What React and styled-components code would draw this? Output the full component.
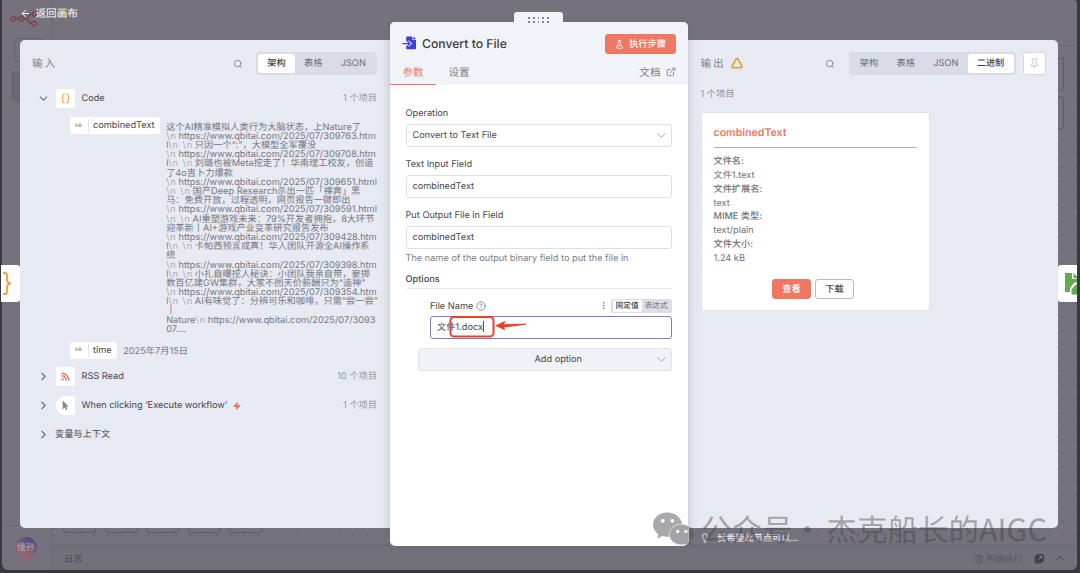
import React from "react";
import styled, { createGlobalStyle } from "styled-components";
import {
  ArrowLeft,
  Search,
  Pin,
  FlaskConical,
  ExternalLink,
  ChevronDown,
  ChevronRight,
  ChevronUp,
  CircleHelp,
  EllipsisVertical,
  Lightbulb,
  Trash2,
  Triangle,
  Zap,
} from "lucide-react";
import { FaRss, FaMousePointer } from "react-icons/fa";

const GlobalStyle = createGlobalStyle`
  * {
    box-sizing: border-box;
  }
  body {
    margin: 0;
    background: #39383c;
    font-family: Inter, "Noto Sans CJK SC", sans-serif;
    font-size: 9.2px;
    line-height: 14px;
    color: #555;
    text-rendering: geometricPrecision;
    -webkit-font-smoothing: antialiased;
  }
  svg {
    display: block;
    flex: none;
  }
`;

const Screen = styled.div`
  position: relative;
  width: 1080px;
  height: 573px;
  overflow: hidden;
  padding: 0 3px 3px 2px;
  background: #39383c;
`;

/* editor behind the dialog */

const Editor = styled.div`
  display: flex;
  width: 100%;
  height: 570px;
  background: #75727d;
  border-radius: 0 3px 6px 6px;
  overflow: hidden;
`;

const Sidebar = styled.div`
  display: flex;
  flex-direction: column;
  width: 50px;
  border-right: 1px solid #6d6a76;
  padding-top: 11px;
`;

const Logo = styled.svg`
  margin-left: 8px;
`;

const SideBox = styled.div`
  width: 30px;
  height: 24px;
  margin: 10px 0 0 12px;
  border: 1px solid #64616d;
  border-radius: 3px;
`;

const SideActive = styled.div`
  width: 34px;
  height: 31px;
  margin: 9px 0 0 9px;
  background: #6a6876;
  border-radius: 3px;
`;

const UserArea = styled.div`
  margin-top: auto;
  height: 45px;
  padding: 11px 0 0 13px;
  border-top: 1px solid #6d6a76;
`;

const Avatar = styled.div`
  width: 22px;
  height: 22px;
  border-radius: 50%;
  background: linear-gradient(215deg, #4d4585 10%, #75607f 48%, #98606a 62%, #8d6a72 90%);
  color: #b3b0ba;
  font-size: 9px;
  line-height: 22px;
  text-align: center;
  white-space: nowrap;
`;

const Workspace = styled.div`
  flex: 1;
  display: flex;
  flex-direction: column;
`;

const TopBar = styled.div`
  height: 46px;
  border-bottom: 1px solid #6c6975;
`;

const Canvas = styled.div`
  flex: 1;
  position: relative;
  display: flex;
  flex-direction: column;
  justify-content: space-between;
  padding-bottom: 12px;
  background-image: radial-gradient(circle, #66636e 0.7px, transparent 1px);
  background-size: 13.65px 13.65px;
  background-position: 8px 5px;
`;

const NodeButtons = styled.div`
  display: flex;
  flex-direction: column;
  align-items: flex-end;
  gap: 5px;
  padding: 12px 13px 0 0;
`;

const CanvasControls = styled.div`
  display: flex;
  gap: 8.5px;
  padding-left: 11px;
`;

const GhostBox = styled.div`
  width: 33px;
  height: 33px;
  border: 1px solid #5f5c68;
  border-radius: 3px;
  background: #75727d;
`;

const LogBar = styled.div`
  display: flex;
  align-items: center;
  height: 25px;
  padding: 2px 11px 0 12px;
  border-top: 1px solid #696672;
  background: #72707a;
  color: #4c4a55;
`;

const LogActions = styled.div`
  display: flex;
  align-items: center;
  margin-left: auto;
  color: #595662;
`;

const LogIcons = styled.div`
  display: flex;
  align-items: center;
  gap: 9px;
  margin: -2px 0 0 11px;
  color: #403e48;
`;

/* node details view */

const Overlay = styled.div`
  position: absolute;
  inset: 0;
`;

const BackLink = styled.div`
  position: absolute;
  left: 20px;
  top: 5px;
  display: flex;
  align-items: center;
  gap: 4.5px;
  height: 16px;
  color: #fff;
  font-size: 10.6px;
`;

const Tip = styled.div`
  position: absolute;
  left: 700px;
  top: 531px;
  display: flex;
  align-items: center;
  gap: 7px;
  height: 14px;
  color: #f4f4f7;
`;

/* drops a text by a pixel beside an icon */
const Text = styled.span`
  padding-top: 1.6px;
`;

const Panels = styled.div`
  display: flex;
  align-items: center;
  height: 568px;
  padding: 0 22px 0 20px;
`;

const SidePanel = styled.div`
  width: 370px;
  height: 488px;
  background: ${(p) =>
    p.$side === "left"
      ? "linear-gradient(to left, #dfe2ec, #e7eaf3 14px)"
      : "linear-gradient(to right, #dfe2ec, #e7eaf3 14px)"};
  border-radius: ${(p) => (p.$side === "left" ? "5px 0 0 5px" : "0 5px 5px 0")};
  padding: ${(p) => (p.$side === "left" ? "12px 13px 0 12px" : "12px 12.5px 0 12.5px")};
`;

const PanelHeader = styled.div`
  display: flex;
  align-items: center;
  height: 23px;
  color: #7e7f87;
`;

const PanelTitle = styled.div`
  padding-top: 1px;
  font-size: 10.6px;
  letter-spacing: 2px;
  margin-right: 5px;
`;

const WarningIcon = styled(Triangle)`
  margin-top: -2px;
`;

const Tabs = styled.div`
  display: flex;
  height: 23px;
  padding: 2px;
  margin-left: ${(p) => p.$left || 13}px;
  background: #d9dce6;
  border-radius: 3px;
`;

const Tab = styled.div`
  display: flex;
  align-items: center;
  padding: 1.6px 9.2px 0;
  border-radius: 3px;
  color: ${(p) => (p.$active ? "#3f4046" : "#6c6d76")};
  background: ${(p) => (p.$active ? "#fff" : "transparent")};
  font-weight: ${(p) => (p.$active ? 500 : 400)};
`;

const Spacer = styled.div`
  flex: 1;
`;

const PinButton = styled.div`
  display: flex;
  align-items: center;
  justify-content: center;
  width: 23px;
  height: 23px;
  margin-left: 7px;
  color: #c3c5d3;
  background: #fff;
  border: 1px solid #d4d6e2;
  border-radius: 3px;
`;

const SchemaRow = styled.div`
  display: flex;
  align-items: center;
  height: 19px;
  margin-top: ${(p) => p.$top}px;
  padding-left: 5px;
  color: #45464c;
`;

const NodeIcon = styled.div`
  display: flex;
  align-items: center;
  justify-content: center;
  width: 18.5px;
  height: 18.5px;
  margin: 0 7px 0 6px;
  background: #fff;
  border-radius: ${(p) => (p.$trigger ? "9px 2px 2px 9px" : "2px")};
  color: ${(p) => p.$color};
`;

const RowChevron = styled(ChevronRight)`
  margin-right: ${(p) => p.$gap || 0}px;
`;

const Trigger = styled(Zap)`
  margin-left: 6px;
`;

const Count = styled.div`
  margin-left: auto;
  padding-top: 1.6px;
  color: #94959d;
`;

const Field = styled.div`
  display: flex;
  align-items: flex-start;
  margin-top: ${(p) => p.$top}px;
  padding-left: 37.5px;
`;

const Pill = styled.div`
  display: flex;
  align-items: center;
  height: 17px;
  background: #fff;
  border-radius: 2.5px;
  color: #45464c;
  margin-right: 6.5px;
  padding-right: 5px;
`;

const PillType = styled.span`
  width: 19px;
  height: 14px;
  margin-right: 4.5px;
  border-right: 1px solid #e3e4ea;
  color: #777;
  font-size: 4.8px;
  font-weight: 500;
  line-height: 14px;
  text-align: center;
  letter-spacing: 0.4px;
`;

const Value = styled.div`
  padding-top: 5.7px;
  color: #75767e;
  font-size: 9.22px;
  line-height: 9.2px;
`;

const Line = styled.div`
  height: 9.2px;
  white-space: pre;
`;

const Newline = styled.span`
  padding-right: 1.8px;
  color: #a9abb5;
  letter-spacing: 0.9px;
`;

const MainPanel = styled.div`
  position: relative;
  width: 298px;
  height: 524px;
  background: #fff;
  border-radius: 5px;
  box-shadow: 0 0 6px rgba(60, 60, 90, 0.2);
`;

const DragHandle = styled.div`
  position: absolute;
  left: 124px;
  top: -10px;
  display: grid;
  grid-template-columns: repeat(5, 1.6px);
  gap: 2.4px 3.2px;
  justify-content: center;
  align-content: center;
  width: 49px;
  height: 14px;
  padding-top: 2px;
  background: #f2f3f9;
  border-radius: 3px 3px 0 0;
`;

const Dot = styled.i`
  width: 1.6px;
  height: 1.6px;
  background: #84858e;
`;

const MainHeader = styled.div`
  height: 63px;
  padding-top: 12px;
  background: #f2f3f9;
  border-radius: 5px 5px 0 0;
`;

const TitleRow = styled.div`
  display: flex;
  align-items: center;
  height: 20px;
  padding: 0 12px 0 12px;
`;

const Title = styled.div`
  margin: -1px 0 0 5px;
  color: #3b3c42;
  font-size: 12.2px;
  font-weight: 500;
`;

const TitleIcon = styled.svg`
  margin-top: -2px;
`;

const ExecuteButton = styled.div`
  display: flex;
  align-items: center;
  justify-content: center;
  gap: 5px;
  width: 71px;
  height: 20px;
  margin-left: auto;
  color: #fff;
  background: #ee7862;
  border-radius: 3px;
  font-weight: 500;
`;

const MainTabs = styled.div`
  display: flex;
  height: 31px;
  font-size: 10.6px;
  color: #7c7d86;
`;

const MainTab = styled.div`
  width: 46px;
  padding-top: 11px;
  text-align: center;
  line-height: 16px;
  color: ${(p) => (p.$active ? "#ee7862" : "#7c7d86")};
  border-bottom: 1.5px solid ${(p) => (p.$active ? "#ee6f5a" : "transparent")};
`;

const Docs = styled.div`
  display: flex;
  align-items: center;
  gap: 5px;
  height: 16px;
  margin: 10px 12.5px 0 auto;
`;

const Form = styled.div`
  padding: 21px 16px 0 15.5px;
  color: #45464c;
`;

const Label = styled.div`
  display: flex;
  align-items: center;
  height: 14px;
  margin-bottom: ${(p) => p.$bottom || 4}px;
  font-weight: ${(p) => (p.$bold ? 500 : 400)};
`;

const Input = styled.div`
  display: flex;
  align-items: center;
  justify-content: space-between;
  height: 23px;
  margin-bottom: ${(p) => p.$bottom}px;
  padding: 0 2.5px 0 6px;
  background: #fff;
  border: 1px solid ${(p) => (p.$focus ? "#8078cf" : "#dcdee9")};
  border-radius: 3px;
`;

const Hint = styled.div`
  height: 14px;
  line-height: 15px;
  margin-bottom: 7.5px;
  color: #7c7d86;
`;

const Rule = styled.div`
  height: 1.4px;
  background: #e6e7f0;
  margin-bottom: 10px;
`;

const Option = styled.div`
  position: relative;
  padding-left: 24.5px;
`;

const ModeSwitch = styled.div`
  display: flex;
  height: 14px;
  margin-left: 3.5px;
  padding: 1.3px;
  background: #dcdee7;
  border-radius: 2.5px;
  font-size: 7.7px;
`;

const Mode = styled.span`
  padding: 0 3px;
  line-height: 12.4px;
  color: ${(p) => (p.$active ? "#3f4046" : "#6c6d76")};
  background: ${(p) => (p.$active ? "#fff" : "transparent")};
  font-weight: ${(p) => (p.$active ? 500 : 400)};
  border-radius: 2px;
`;

const Caret = styled.span`
  display: inline-block;
  width: 1px;
  height: 11px;
  background: #555;
  vertical-align: -2px;
`;

const Marker = styled.svg`
  position: absolute;
  left: 42px;
  top: 16px;
`;

const AddOption = styled.div`
  display: flex;
  align-items: center;
  justify-content: space-between;
  height: 23px;
  margin-left: 12px;
  padding: 0 2.5px 0 116px;
  background: #f1f2f8;
  border: 1px solid #dfe1eb;
  border-radius: 3px;
`;

const ItemCount = styled.div`
  height: 14px;
  line-height: 15px;
  margin-top: 11.5px;
  color: #8c8d95;
`;

const Card = styled.div`
  width: 229px;
  height: 199px;
  margin-top: 11.5px;
  padding: 12px 11.5px 0 12px;
  background: #fff;
  border: 1px solid #e0e2ec;
  border-radius: 3px;
`;

const CardTitle = styled.div`
  height: 23px;
  line-height: 15px;
  color: #ee7862;
  font-size: 10.6px;
  font-weight: 600;
  border-bottom: 1px solid #adaeb4;
  margin-bottom: 7.2px;
`;

const CardLine = styled.div`
  height: 13.8px;
  line-height: 13.8px;
  color: #6f7078;
  font-weight: ${(p) => (p.$bold ? 500 : 400)};
`;

const CardButtons = styled.div`
  display: flex;
  justify-content: center;
  gap: 4px;
  margin: 13px 4.5px 0 0;
`;

const CardButton = styled.div`
  width: 39px;
  height: 20px;
  line-height: 19.6px;
  text-align: center;
  font-weight: 500;
  border-radius: 3px;
  color: ${(p) => (p.$primary ? "#fff" : "#45464c")};
  background: ${(p) => (p.$primary ? "#ee7862" : "#fff")};
  border: 1px solid ${(p) => (p.$primary ? "#ee7862" : "#b9bbc7")};
`;

const FloatingNode = styled.div`
  position: absolute;
  top: 265px;
  ${(p) => p.$side}: ${(p) => (p.$side === "left" ? 1 : 3)}px;
  width: 19px;
  height: 37px;
  overflow: hidden;
  background: #fff;
  border-radius: ${(p) => (p.$side === "left" ? "0 3px 3px 0" : "3px 0 0 3px")};
`;

const Watermark = styled.div`
  position: absolute;
  left: 652px;
  top: 507px;
  display: flex;
  align-items: center;
  height: 42px;
  color: rgba(60, 60, 60, 0.42);
  font-family: "Noto Sans CJK SC", sans-serif;
  font-size: 30.4px;
  font-weight: 400;
  line-height: 42px;
  white-space: pre;
`;

const WatermarkText = styled.span`
  margin-left: ${(p) => p.$left}px;
  letter-spacing: ${(p) => p.$spacing || 0}px;
`;

const N = "\\n";
const lines = [
  ["", "这个AI精准模拟人类行为大脑状态，上Nature了"],
  [N, "https://www.qbitai.com/2025/07/309763.htm"],
  [N + " " + N, "只因一个“:”，大模型全军覆没", "l"],
  [N, "https://www.qbitai.com/2025/07/309708.htm"],
  [N + " " + N, "刘璐也被Meta挖走了！华南理工校友，创造", "l"],
  ["", "了4o吉卜力爆款"],
  [N, "https://www.qbitai.com/2025/07/309651.html"],
  [N + " " + N, "国产Deep Research杀出一匹「裸奔」黑"],
  ["", "马：免费开放，过程透明，网页报告一键即出"],
  [N, "https://www.qbitai.com/2025/07/309591.html"],
  [N + " " + N, "AI重塑游戏未来：79%开发者拥抱，8大环节"],
  ["", "迎革新丨AI+游戏产业变革研究报告发布"],
  [N, "https://www.qbitai.com/2025/07/309428.htm"],
  [N + " " + N, "卡帕西预言成真！华人团队开源全AI操作系", "l"],
  ["", "统"],
  [N, "https://www.qbitai.com/2025/07/309398.htm"],
  [N + " " + N, "小扎自曝挖人秘诀：小团队我亲自带，豪掷", "l"],
  ["", "数百亿建GW集群，大家不图天价薪酬只为“造神”"],
  [N, "https://www.qbitai.com/2025/07/309354.htm"],
  [N + " " + N, "AI有味觉了：分辨可乐和咖啡，只需“尝一尝”", "l"],
  ["", "丨"],
  [N, "https://www.qbitai.com/2025/07/3093", "Nature"],
  ["", "07...."],
];

const details = [
  ["文件名:", "文件1.text"],
  ["文件扩展名:", "text"],
  ["MIME 类型:", "text/plain"],
  ["文件大小:", "1.24 kB"],
];

const N8nLogo = () => (
  <Logo width="29" height="17" viewBox="0 0 29 17" fill="none" stroke="#7b4455" strokeWidth="1.5">
    <circle cx="3.2" cy="7.7" r="2.3" />
    <circle cx="11.4" cy="7.7" r="2.3" />
    <circle cx="24.5" cy="3" r="2.3" />
    <circle cx="24" cy="12.6" r="2.3" />
    <path d="M5.6 7.7h3.5M13.8 7.7h2.4c3.4 0 1.8-4.7 5-4.7h1M16.2 7.7c3.4 0 1.8 4.9 5 4.9h.6" />
  </Logo>
);

const FileIcon = () => (
  <TitleIcon width="15" height="14" viewBox="0 0 15 14">
    <path
      d="M5 .5h5.3v3.2H14v8.8a.8.8 0 0 1-.8.8H5a.8.8 0 0 1-.8-.8V10h2.200v1.300L10.200 7.600 6.400 3.900V5.200H4.200V1.300A.8.8 0 0 1 5 .5z"
      fill="#3b42dc"
    />
    <path d="M11.2.5 14 3h-2.8z" fill="#3b42dc" />
    <path d="M.4 7.6h7M5.500 5.300l2.500 2.300-2.500 2.400" fill="none" stroke="#3b42dc" strokeWidth="1.300" />
  </TitleIcon>
);

const Braces = () => (
  <svg width="11" height="11" viewBox="0 0 24 24" fill="none" stroke="#f4a142" strokeWidth="2.4">
    <path d="M10 3H9C6.5 3 6 4.5 6 6v3.5C6 11 5 12 3.5 12 5 12 6 13 6 14.5V18c0 1.5.5 3 3 3h1" />
    <path d="M14 3h1c2.5 0 3 1.5 3 3v3.5c0 1.5 1 2.5 2.5 2.5-1.5 0-2.5 1-2.5 2.5V18c0 1.5-.5 3-3 3h-1" />
  </svg>
);

const OpenIcon = () => (
  <svg width="11" height="11" viewBox="0 0 11 11" fill="none">
    <path d="M1.2 3v6.800H8" stroke="#403e48" strokeWidth="1.2" />
    <rect x="2" y="1" width="8" height="8" rx="1.5" fill="#403e48" />
    <path d="M4.300 6.800 7.600 3.400M5.200 3.200h2.600v2.600" stroke="#85828d" strokeWidth="1" />
  </svg>
);

const WechatIcon = () => (
  <svg width="43" height="38" viewBox="0 0 43 38">
    <path
      fill="#a9a9ab"
      d="M15.500 3.500C7.300 3.500 1 8.900 1 15.800c0 3.900 2 7.100 5.400 9.400L5.200 29.800l5-2.700c1.700.4 3.500.7 5.300.7C23.500 27.800 30 22.500 30 15.800S23.500 3.500 15.500 3.500z"
    />
    <circle cx="10.700" cy="11.800" r="1.900" fill="#fff" />
    <circle cx="20.400" cy="11.800" r="1.900" fill="#fff" />
    <path
      fill="#a3a3a5"
      stroke="#e4e4e8"
      strokeWidth="0.8"
      d="M29.500 15.300c-7 0-12.200 4.600-12.200 10.300s5.500 10.300 12.200 10.300c3 0 5.600-.9 7.600-2.400L37.100 17.700c-2-1.500-4.600-2.400-7.600-2.400z"
    />
    <path fill="#626067" d="M37.100 17.700c2.900 1.900 4.700 4.700 4.700 7.900 0 3.200-1.800 5.600-3.700 7.200l1 3.400-4.200-1.500 2.200-1.200z" />
    <circle cx="25.700" cy="22.400" r="1.700" fill="#fff" />
    <circle cx="33.900" cy="22.400" r="1.700" fill="#fff" />
  </svg>
);

const InputPanel = () => (
  <SidePanel $side="left">
    <PanelHeader>
      <PanelTitle>输入</PanelTitle>
      <Spacer />
      <Search size={10} />
      <Tabs>
        <Tab $active>架构</Tab>
        <Tab>表格</Tab>
        <Tab>JSON</Tab>
      </Tabs>
    </PanelHeader>
    <SchemaRow $top={14}>
      <ChevronDown size={13} color="#6c6d76" />
      <NodeIcon>
        <Braces />
      </NodeIcon>
      <Text>Code</Text>
      <Count>1 个项目</Count>
    </SchemaRow>
    <Field $top={9}>
      <Pill>
        <PillType>AB</PillType>
        <Text>combinedText</Text>
      </Pill>
      <Value>
        {lines.map(([escape, text, before], i) => (
          <Line key={i}>
            {before}
            {escape && <Newline>{escape}</Newline>}
            {text}
          </Line>
        ))}
      </Value>
    </Field>
    <Field $top={7.5}>
      <Pill>
        <PillType>AB</PillType>
        <Text>time</Text>
      </Pill>
      <Value>2025年7月15日</Value>
    </Field>
    <SchemaRow $top={8.5}>
      <RowChevron size={13} color="#6c6d76" />
      <NodeIcon $color="#ee6f5a">
        <FaRss size={9} />
      </NodeIcon>
      <Text>RSS Read</Text>
      <Count>10 个项目</Count>
    </SchemaRow>
    <SchemaRow $top={10}>
      <RowChevron size={13} color="#6c6d76" />
      <NodeIcon $trigger $color="#85868e">
        <FaMousePointer size={9} />
      </NodeIcon>
      <Text>When clicking ‘Execute workflow’</Text>
      <Trigger size={8} color="#ee6f5a" fill="#ee6f5a" />
      <Count>1 个项目</Count>
    </SchemaRow>
    <SchemaRow $top={10}>
      <RowChevron size={13} color="#6c6d76" $gap={5} />
      <Text>变量与上下文</Text>
    </SchemaRow>
  </SidePanel>
);

const ParametersPanel = () => (
  <MainPanel>
    <DragHandle>
      {[...Array(10)].map((_, i) => (
        <Dot key={i} />
      ))}
    </DragHandle>
    <MainHeader>
      <TitleRow>
        <FileIcon />
        <Title>Convert to File</Title>
        <ExecuteButton>
          <FlaskConical size={9} />
          <Text>执行步骤</Text>
        </ExecuteButton>
      </TitleRow>
      <MainTabs>
        <MainTab $active>参数</MainTab>
        <MainTab>设置</MainTab>
        <Docs>
          <Text>文档</Text>
          <ExternalLink size={10} />
        </Docs>
      </MainTabs>
    </MainHeader>
    <Form>
      <Label>
        <Text>Operation</Text>
      </Label>
      <Input $bottom={10.5}>
        <Text>Convert to Text File</Text>
        <ChevronDown size={15} color="#a2a4b0" strokeWidth={1.5} />
      </Input>
      <Label $bottom={3.5}>
        <Text>Text Input Field</Text>
      </Label>
      <Input $bottom={10}>
        <Text>combinedText</Text>
      </Input>
      <Label $bottom={3.5}>
        <Text>Put Output File in Field</Text>
      </Label>
      <Input $bottom={2.5}>
        <Text>combinedText</Text>
      </Input>
      <Hint>The name of the output binary field to put the file in</Hint>
      <Label $bold $bottom={1}>
        <Text>Options</Text>
      </Label>
      <Rule />
      <Option>
        <Label $bottom={3}>
          <Text>File Name&nbsp;</Text>
          <CircleHelp size={10} color="#7c7d86" />
          <Spacer />
          <EllipsisVertical size={9} color="#6c6d76" />
          <ModeSwitch>
            <Mode $active>固定值</Mode>
            <Mode>表达式</Mode>
          </ModeSwitch>
        </Label>
        <Input $focus $bottom={9}>
          <Text>
            文件1.docx
            <Caret />
          </Text>
        </Input>
        <Marker width="82" height="24" viewBox="0 0 82 24">
          <rect x="2.5" y="2" width="43" height="19.5" rx="3.5" fill="none" stroke="#e8412a" strokeWidth="2" />
          <path d="M47 10.7 57.5 5.7 56 9.3 78 8.4v1.3L56 12.6 57.5 15.5z" fill="#e8412a" />
        </Marker>
      </Option>
      <AddOption>
        <Text>Add option</Text>
        <ChevronDown size={15} color="#a2a4b0" strokeWidth={1.5} />
      </AddOption>
    </Form>
  </MainPanel>
);

const OutputPanel = () => (
  <SidePanel $side="right">
    <PanelHeader>
      <PanelTitle>输出</PanelTitle>
      <WarningIcon size={12} color="#e3a447" strokeWidth={3.5} />
      <Spacer />
      <Search size={10} />
      <Tabs $left={14}>
        <Tab>架构</Tab>
        <Tab>表格</Tab>
        <Tab>JSON</Tab>
        <Tab $active>二进制</Tab>
      </Tabs>
      <PinButton>
        <Pin size={11} />
      </PinButton>
    </PanelHeader>
    <ItemCount>1 个项目</ItemCount>
    <Card>
      <CardTitle>combinedText</CardTitle>
      {details.map(([label, value]) => (
        <React.Fragment key={label}>
          <CardLine $bold>{label}</CardLine>
          <CardLine>{value}</CardLine>
        </React.Fragment>
      ))}
      <CardButtons>
        <CardButton $primary>查看</CardButton>
        <CardButton>下载</CardButton>
      </CardButtons>
    </Card>
  </SidePanel>
);

const App = () => (
  <Screen>
    <GlobalStyle />
    <Editor>
      <Sidebar>
        <N8nLogo />
        <SideBox />
        <SideActive />
        <UserArea>
          <Avatar>佳孙</Avatar>
        </UserArea>
      </Sidebar>
      <Workspace>
        <TopBar />
        <Canvas>
          <NodeButtons>
            <GhostBox />
            <GhostBox />
          </NodeButtons>
          <CanvasControls>
            {[...Array(5)].map((_, i) => (
              <GhostBox key={i} />
            ))}
          </CanvasControls>
        </Canvas>
        <LogBar>
          <Text>日志</Text>
          <LogActions>
            <Trash2 size={10} />
            <Text>&nbsp;明确执行</Text>
            <LogIcons>
              <OpenIcon />
              <ChevronUp size={12} />
            </LogIcons>
          </LogActions>
        </LogBar>
      </Workspace>
    </Editor>
    <Overlay>
      <BackLink>
        <ArrowLeft size={11} />
        <Text>返回画布</Text>
      </BackLink>
      <Panels>
        <InputPanel />
        <ParametersPanel />
        <OutputPanel />
      </Panels>
      <FloatingNode $side="left">
        <svg width="19" height="37" viewBox="0 0 19 37" fill="none" stroke="#f4a142" strokeWidth="2">
          <path d="M2 8h1.500c2 0 2.600 1 2.600 2.600v4.200c0 2 1.200 3.500 4 3.700-2.800.2-4 1.700-4 3.700v4.200c0 1.600-.6 2.600-2.600 2.600H2" />
        </svg>
      </FloatingNode>
      <FloatingNode $side="right">
        <svg width="19" height="37" viewBox="0 0 19 37">
          <path d="M7 8h7v6h5v3.5h-2.500L12 23v4H7z" fill="#62ab51" />
          <path d="M15.500 8 19 11.500V13h-3.500zM13.500 24.500l2-2.500L19 18.800v10.700h-5.500z" fill="#62ab51" />
        </svg>
      </FloatingNode>
      <Tip>
        <Lightbulb size={10} />
        <Text>我希望此节点可以...</Text>
      </Tip>
      <Watermark>
        <WechatIcon />
        <WatermarkText $left={6} $spacing={0.3}>公众号</WatermarkText>
        <WatermarkText $left={-1}>·</WatermarkText>
        <WatermarkText $left={4} $spacing={0.1}>杰克船长的AIGC</WatermarkText>
      </Watermark>
    </Overlay>
  </Screen>
);

export default App;
